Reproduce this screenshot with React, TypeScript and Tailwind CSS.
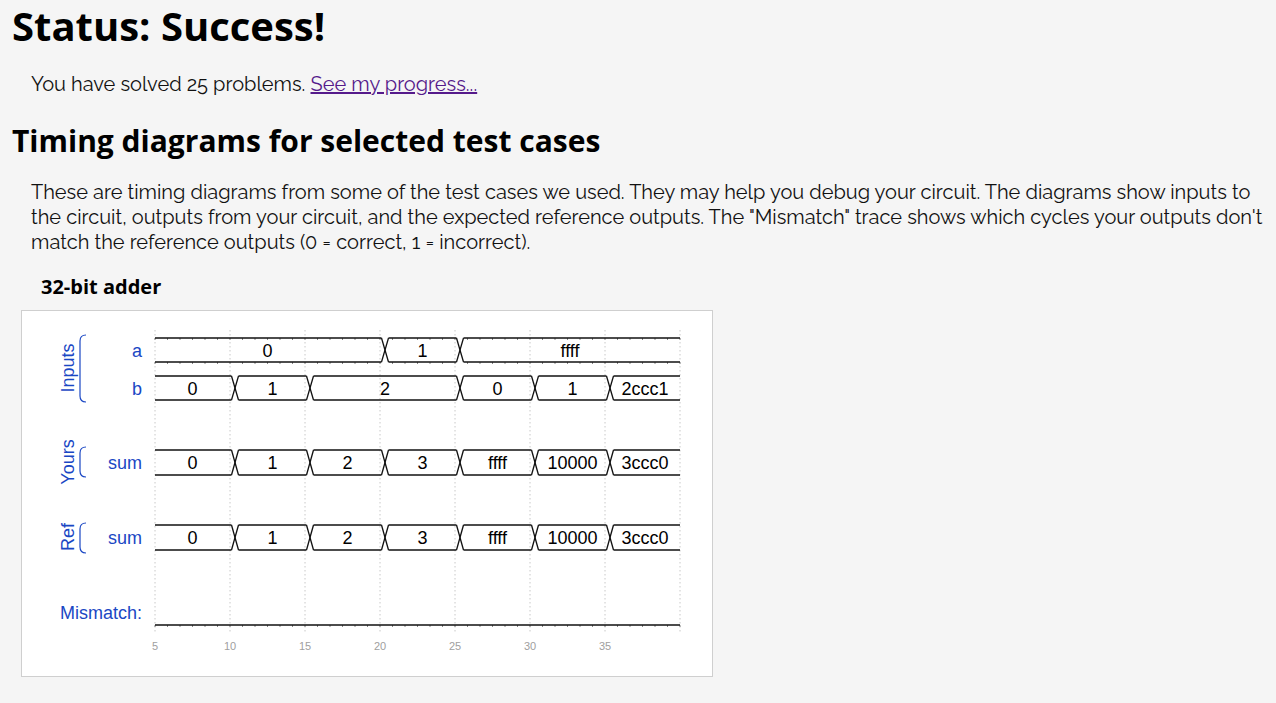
import React from "react";

const X0 = 155;
const XEND = 680;
const PX = 15;
const tx = (t: number) => X0 + (t - 5) * PX;
const FONT = "'Liberation Sans', Arial, sans-serif";

type Seg = { v: string; s: number; e: number };

function Bus({ top, bot, segs }: { top: number; bot: number; segs: Seg[] }) {
  const mid = (top + bot) / 2;
  const els: React.ReactNode[] = [];
  segs.forEach((sg, i) => {
    const first = i === 0;
    const last = i === segs.length - 1;
    const L = first ? X0 : tx(sg.s) + 8.5;
    const R = last ? XEND : tx(sg.e) + 1.5;
    els.push(<line key={"t" + i} x1={L} y1={top} x2={R} y2={top} stroke="#111" strokeWidth={1.3} />);
    els.push(<line key={"b" + i} x1={L} y1={bot} x2={R} y2={bot} stroke="#111" strokeWidth={1.3} />);
    if (!last) {
      const X = tx(sg.e);
      els.push(<line key={"x1" + i} x1={X + 1.5} y1={top} x2={X + 8.5} y2={bot} stroke="#111" strokeWidth={1.3} />);
      els.push(<line key={"x2" + i} x1={X + 1.5} y1={bot} x2={X + 8.5} y2={top} stroke="#111" strokeWidth={1.3} />);
    }
    const cl = first ? 150 : tx(sg.s) + 5;
    const cr = last ? XEND : tx(sg.e) + 5;
    els.push(
      <text key={"v" + i} x={(cl + cr) / 2} y={mid + 6.5} textAnchor="middle" fontSize={18} fill="#000" fontFamily={FONT}>
        {sg.v}
      </text>
    );
  });
  return <g>{els}</g>;
}

function Ticks({ y }: { y: number }) {
  const t: React.ReactNode[] = [];
  for (let k = 0; k <= 42; k++) {
    const x = X0 + k * 12.5;
    t.push(<line key={k} x1={x} y1={y} x2={x} y2={y + 2} stroke="#888" strokeWidth={1} />);
  }
  return <g>{t}</g>;
}

const BLUE = "#1a47c4";

function Brace({ y1, y2 }: { y1: number; y2: number }) {
  return (
    <path
      d={`M 86 ${y1} Q 80 ${y1} 80 ${y1 + 6} L 80 ${y2 - 6} Q 80 ${y2} 86 ${y2}`}
      fill="none"
      stroke={BLUE}
      strokeWidth={1.2}
    />
  );
}

function Diagram() {
  const sumSegs: Seg[] = [
    { v: "0", s: 5, e: 10 },
    { v: "1", s: 10, e: 15 },
    { v: "2", s: 15, e: 20 },
    { v: "3", s: 20, e: 25 },
    { v: "ffff", s: 25, e: 30 },
    { v: "10000", s: 30, e: 35 },
    { v: "3ccc0", s: 35, e: 40 },
  ];
  const grid = [5, 10, 15, 20, 25, 30, 35, 40];
  const lbl = { fontFamily: FONT, fontSize: 18, fill: BLUE };
  return (
    <svg width={690} height={365} className="block">
      <g transform="translate(-22,-311)">
        {grid.map((t) => (
          <line key={t} x1={tx(t)} y1={330} x2={tx(t)} y2={632} stroke="#c8c8c8" strokeWidth={1} strokeDasharray="1.5 2.5" />
        ))}
        <Ticks y={338} />
        <Ticks y={362} />
        <Ticks y={625} />
        <Bus
          top={338}
          bot={362}
          segs={[
            { v: "0", s: 5, e: 20 },
            { v: "1", s: 20, e: 25 },
            { v: "ffff", s: 25, e: 40 },
          ]}
        />
        <Bus
          top={376}
          bot={400}
          segs={[
            { v: "0", s: 5, e: 10 },
            { v: "1", s: 10, e: 15 },
            { v: "2", s: 15, e: 25 },
            { v: "0", s: 25, e: 30 },
            { v: "1", s: 30, e: 35 },
            { v: "2ccc1", s: 35, e: 40 },
          ]}
        />
        <Bus top={450} bot={475} segs={sumSegs} />
        <Bus top={525} bot={550} segs={sumSegs} />
        <line x1={X0} y1={625} x2={XEND} y2={625} stroke="#111" strokeWidth={1.3} />

        <text x={142} y={356.5} textAnchor="end" {...lbl}>a</text>
        <text x={142} y={394.5} textAnchor="end" {...lbl}>b</text>
        <text x={142} y={469} textAnchor="end" {...lbl}>sum</text>
        <text x={142} y={544} textAnchor="end" {...lbl}>sum</text>
        <text x={142} y={619} textAnchor="end" {...lbl}>Mismatch:</text>

        <text transform="translate(74,368) rotate(-90)" textAnchor="middle" {...lbl}>Inputs</text>
        <text transform="translate(74,462) rotate(-90)" textAnchor="middle" {...lbl}>Yours</text>
        <text transform="translate(74,537) rotate(-90)" textAnchor="middle" {...lbl}>Ref</text>
        <Brace y1={335} y2={402} />
        <Brace y1={447} y2={477} />
        <Brace y1={523} y2={553} />

        {[5, 10, 15, 20, 25, 30, 35].map((t) => (
          <text key={t} x={tx(t)} y={650} textAnchor="middle" fontSize={11} fill="#a0a0a0" fontFamily={FONT}>
            {t}
          </text>
        ))}
      </g>
    </svg>
  );
}

export default function App() {
  const body = "font-['Raleway','Lato',sans-serif] oldstyle-nums";
  return (
    <div className="min-h-[703px] w-full bg-[#f5f5f5] text-black">
      <div className="px-3 pt-0">
        <h1 className="font-['Open_Sans',sans-serif] text-[40px] font-bold leading-[52px]">Status: Success!</h1>
        <div className={`${body} mt-[19px] pl-[19px] text-[20px] leading-[26px] text-[#111]`}>
          You have solved 25 problems.{" "}
          <a href="#" className="text-[#551a8b] underline">
            See my progress...
          </a>
        </div>
        <h2 className="mt-[25px] font-['Open_Sans',sans-serif] text-[30px] font-bold leading-[38px]">
          Timing diagrams for selected test cases
        </h2>
        <div className={`${body} mt-[20px] pl-[19px] text-[20px] leading-[25px] text-[#111]`}>
          <div className="whitespace-nowrap">
            These are timing diagrams from some of the test cases we used. They may help you debug your circuit. The diagrams show inputs to
          </div>
          <div className="whitespace-nowrap">
            the circuit, outputs from your circuit, and the expected reference outputs. The "Mismatch" trace shows which cycles your outputs don't
          </div>
          <div className="whitespace-nowrap">match the reference outputs (0 = correct, 1 = incorrect).</div>
        </div>
        <div className="mt-[19px] pl-[29px] font-['Open_Sans',sans-serif] text-[20px] font-bold leading-[26px]">32-bit adder</div>
        <div className="mt-[10px] ml-[9px] w-[692px] border border-[#cfcfcf] bg-white">
          <Diagram />
        </div>
      </div>
    </div>
  );
}
